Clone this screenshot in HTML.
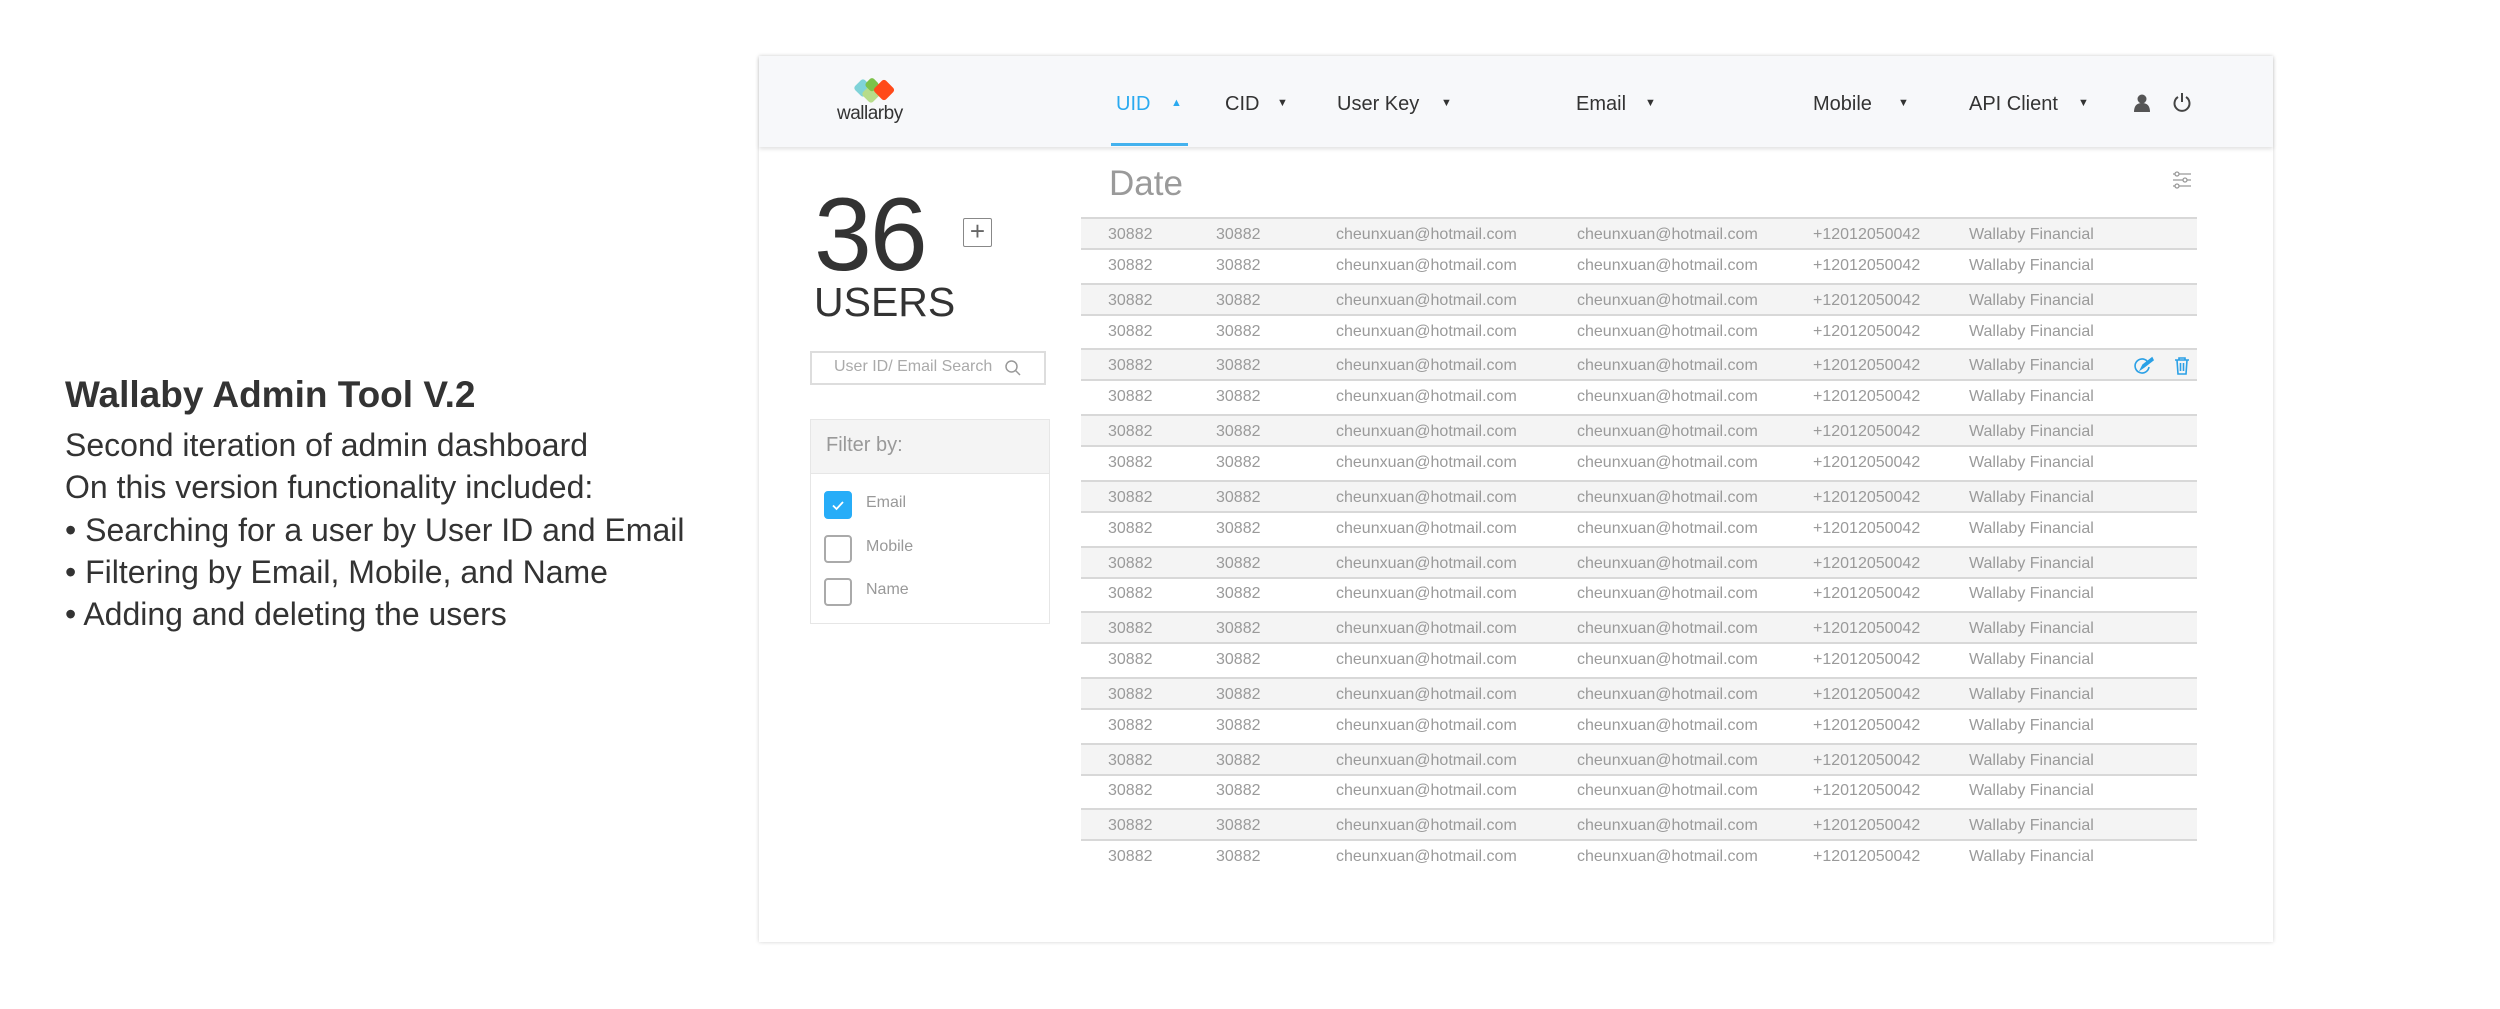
<!DOCTYPE html>
<html><head><meta charset="utf-8"><style>
*{margin:0;padding:0;box-sizing:border-box}
body{width:2500px;height:1009px;background:#fff;position:relative;overflow:hidden;font-family:"Liberation Sans",sans-serif}
.a{position:absolute;white-space:nowrap}
.lt{left:65px;color:#333;font-size:32px;line-height:42px}
.panel{position:absolute;left:759px;top:56px;width:1514px;height:886px;background:#fff;box-shadow:0 0 4px rgba(0,0,0,.18)}
.hdr{position:absolute;left:759px;top:56px;width:1514px;height:91px;background:#f7f8fa;box-shadow:0 2px 4px rgba(0,0,0,.12)}
.h{font-size:20px;color:#333;top:93px}
.ar{font-size:11px;color:#333;top:97px}
.row{position:absolute;left:1081px;width:1116px;height:33px;font-size:16px;color:#9a9a9a}
.row.g{background:#f4f4f4;border-top:2px solid #d8d8d8;border-bottom:2px solid #d8d8d8}
.row span{position:absolute;top:7px}
.cb{position:absolute;left:824px;width:28px;height:28px;border:2px solid #aaa;border-radius:4px}
.cl{font-size:16px;color:#999;left:866px}
</style></head><body>
<div class="a lt" style="top:374px;font-weight:bold;font-size:37px">Wallaby Admin Tool V.2</div>
<div class="a lt" style="top:424px">Second iteration of admin dashboard</div>
<div class="a lt" style="top:466px">On this version functionality included:</div>
<div class="a lt" style="top:509px">• Searching for a user by User ID and Email</div>
<div class="a lt" style="top:551px">• Filtering by Email, Mobile, and Name</div>
<div class="a lt" style="top:593px">• Adding and deleting the users</div>

<div class="panel"></div>
<div class="hdr"></div>
<svg class="a" style="left:852px;top:78px" width="50" height="28" viewBox="0 0 50 28">
<rect x="4" y="3" width="14" height="14" rx="3" fill="#7fd3d8" transform="rotate(45 11 10)"/>
<rect x="12" y="9" width="14" height="14" rx="3" fill="#b7dc8a" transform="rotate(45 19 16)"/>
<rect x="15" y="1" width="11" height="11" rx="3" fill="#7cc24a" transform="rotate(45 20 6)"/>
<rect x="24" y="4" width="16" height="16" rx="3" fill="#ff4a1a" transform="rotate(45 32 12)"/>
</svg>
<div class="a" style="left:837px;top:103px;font-size:19px;color:#333;letter-spacing:-0.5px">wallarby</div>

<div class="a h" style="left:1116px;color:#2aaaf0">UID</div><div class="a ar" style="left:1171px;color:#2aaaf0">▲</div>
<div style="position:absolute;left:1111px;top:143px;width:77px;height:3px;background:#44b2ee"></div>
<div class="a h" style="left:1225px">CID</div><div class="a ar" style="left:1277px">▼</div>
<div class="a h" style="left:1337px">User Key</div><div class="a ar" style="left:1441px">▼</div>
<div class="a h" style="left:1576px">Email</div><div class="a ar" style="left:1645px">▼</div>
<div class="a h" style="left:1813px">Mobile</div><div class="a ar" style="left:1898px">▼</div>
<div class="a h" style="left:1969px">API Client</div><div class="a ar" style="left:2078px">▼</div>
<svg class="a" style="left:2133px;top:93px" width="18" height="20" viewBox="0 0 18 20"><circle cx="9" cy="6" r="4.5" fill="#555"/><path d="M1 19 Q1 10 9 10 Q17 10 17 19Z" fill="#555"/></svg>
<svg class="a" style="left:2172px;top:92px" width="20" height="22" viewBox="0 0 20 22"><path d="M6 5 A7.5 7.5 0 1 0 14 5" fill="none" stroke="#444" stroke-width="2"/><path d="M10 1 V10" stroke="#444" stroke-width="2"/></svg>

<div class="a" style="left:1109px;top:164px;font-size:35px;color:#9a9a9a">Date</div>
<svg class="a" style="left:2172px;top:170px" width="20" height="20" viewBox="0 0 20 20" fill="none" stroke="#999" stroke-width="1.3"><path d="M1 4H19M1 10H19M1 16H19"/><circle cx="5" cy="4" r="2" fill="#fff"/><circle cx="13" cy="10" r="2" fill="#fff"/><circle cx="5" cy="16" r="2" fill="#fff"/></svg>

<div class="a" style="left:814px;top:176px;font-size:104px;color:#333;font-weight:300;letter-spacing:-2px">36</div>
<div style="position:absolute;left:963px;top:218px;width:29px;height:29px;border:1.5px solid #888;border-radius:2px;color:#666;font-size:26px;line-height:24px;text-align:center">+</div>
<div class="a" style="left:814px;top:279px;font-size:41px;color:#333">USERS</div>
<div style="position:absolute;left:810px;top:351px;width:236px;height:34px;border:2px solid #ddd"></div>
<div class="a" style="left:834px;top:358px;font-size:16px;color:#aaa">User ID/ Email Search</div>
<svg class="a" style="left:1004px;top:359px" width="18" height="18" viewBox="0 0 18 18" fill="none" stroke="#999" stroke-width="1.5"><circle cx="7.5" cy="7.5" r="5.5"/><path d="M11.5 11.5L16 16"/></svg>

<div style="position:absolute;left:810px;top:419px;width:240px;height:205px;border:1px solid #e6e6e6"></div>
<div style="position:absolute;left:810px;top:419px;width:240px;height:55px;background:#f4f4f4;border:1px solid #e6e6e6"></div>
<div class="a" style="left:826px;top:434px;font-size:20px;color:#999">Filter by:</div>
<div class="cb" style="top:491px;background:#27adf8;border-color:#27adf8"><svg width="24" height="24" viewBox="0 0 24 24" style="position:absolute;left:0;top:0"><path d="M7 12.5L10.5 16L17 9" fill="none" stroke="#fff" stroke-width="1.8"/></svg></div>
<div class="a cl" style="top:494px">Email</div>
<div class="cb" style="top:535px"></div><div class="a cl" style="top:538px">Mobile</div>
<div class="cb" style="top:578px"></div><div class="a cl" style="top:581px">Name</div>

<div id="t"></div>
<script>
var h='';for(var i=0;i<20;i++){var y=217+i*32.85;h+='<div class="row'+(i%2==0?' g':'')+'" style="top:'+y+'px"><span style="left:27px">30882</span><span style="left:135px">30882</span><span style="left:255px">cheunxuan@hotmail.com</span><span style="left:496px">cheunxuan@hotmail.com</span><span style="left:732px">+12012050042</span><span style="left:888px">Wallaby Financial</span>'+(i==4?'<svg style="position:absolute;left:1052px;top:6px" width="22" height="20" viewBox="0 0 22 20" fill="none" stroke="#2aa0e6" stroke-width="1.6"><path d="M14 5A7 7 0 1 0 16 11"/><path d="M8 13L10 9L19 2L20 4L11 11Z" fill="#2aa0e6"/></svg><svg style="position:absolute;left:1093px;top:6px" width="16" height="20" viewBox="0 0 16 20" fill="none" stroke="#2aa0e6" stroke-width="1.6"><path d="M1 4H15M5 4V2H11V4M3 4L4 18H12L13 4M6.5 7V15M9.5 7V15"/></svg>':'')+'</div>';}
document.getElementById('t').innerHTML=h;
</script>
</body></html>
